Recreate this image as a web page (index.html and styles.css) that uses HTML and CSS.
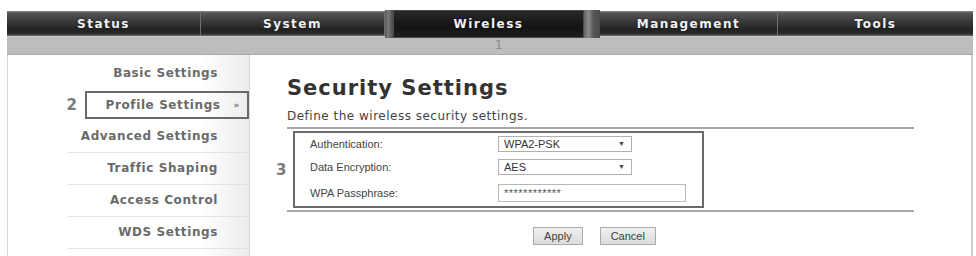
FILE: index.html
```html
<!DOCTYPE html>
<html>
<head>
<meta charset="utf-8">
<link rel="stylesheet" href="styles.css">
</head>
<body>
<div class="page">
  <nav class="topnav">
    <div class="tab">Status</div>
    <div class="tab">System</div>
    <div class="tab active"><span class="tab-inner">Wireless</span></div>
    <div class="tab">Management</div>
    <div class="tab last">Tools</div>
  </nav>
  <div class="subbar"><span class="subnum">1</span></div>
  <div class="main">
    <aside class="sidebar">
      <div class="side-item first">Basic Settings</div>
      <div class="side-row">
        <span class="anno">2</span>
        <div class="side-current"><span>Profile Settings</span><span class="raquo">&raquo;</span></div>
      </div>
      <div class="side-item">Advanced Settings</div>
      <div class="side-item">Traffic Shaping</div>
      <div class="side-item">Access Control</div>
      <div class="side-item">WDS Settings</div>
    </aside>
    <section class="content">
      <h1 class="title">Security Settings</h1>
      <p class="desc">Define the wireless security settings.</p>
      <div class="formwrap">
        <span class="anno anno3">3</span>
        <div class="formbox">
          <div class="frow">
            <label class="flabel">Authentication:</label>
            <div class="fsel"><span class="fsel-val">WPA2-PSK</span><span class="fsel-arrow">&#9660;</span></div>
          </div>
          <div class="frow">
            <label class="flabel">Data Encryption:</label>
            <div class="fsel"><span class="fsel-val">AES</span><span class="fsel-arrow">&#9660;</span></div>
          </div>
          <div class="frow">
            <label class="flabel">WPA Passphrase:</label>
            <div class="finput">************</div>
          </div>
        </div>
      </div>
      <div class="buttons">
        <button class="btn">Apply</button>
        <button class="btn">Cancel</button>
      </div>
    </section>
  </div>
</div>
</body>
</html>
```
FILE: styles.css
```css
html, body {
  margin: 0;
  padding: 0;
  background: #ffffff;
}
.page {
  margin: 11px 0 0 7px;
  width: 966px;
  font-family: "DejaVu Sans", Verdana, sans-serif;
}
.topnav {
  display: grid;
  grid-template-columns: 194px 184px 215px 178px 195px;
  height: 25px;
  background: linear-gradient(#8a8a8a 0, #555 2px, #3e3e3e 35%, #222 75%, #2a2a2a 90%, #6a6a6a 100%);
}
.tab {
  display: flex;
  align-items: center;
  justify-content: center;
  color: #f2f2f2;
  font-weight: bold;
  font-size: 12px;
  letter-spacing: 1.5px;
  text-shadow: 0 0 2px rgba(0,0,0,0.6);
  border-right: 1px solid #6e6e6e;
}
.tab.last { border-right: none; }
.tab.active {
  border-right: none;
  padding: 0 16px 0 8px;
  margin-top: -1px;
  margin-bottom: -2px;
  background: linear-gradient(to right, #5a5a5a, #7a7a7a 40%, #4a4a4a 100%) left / 8px 100% no-repeat,
              linear-gradient(to right, #666, #8a8a8a 30%, #555 60%, #4a4a4a) right / 16px 100% no-repeat;
}
.tab-inner {
  flex: 1;
  height: 100%;
  display: flex;
  align-items: center;
  justify-content: center;
  background: linear-gradient(#2a2a2a, #141414 60%, #1e1e1e);
  box-shadow: inset 0 0 0 1px #4a4a4a;
}
.subbar {
  height: 19px;
  background: #bdbdbd;
  border-top: 1px solid #c8c8c8;
  border-bottom: 1px solid #aaa;
  box-sizing: border-box;
  font-size: 12px;
  line-height: 17px;
  color: #8a8a8a;
  padding-left: 488px;
}
.main {
  display: flex;
  height: 201px;
  border-left: 1px solid #d6d6d6;
  border-right: 2px solid #cfcfcf;
}
.sidebar {
  width: 241px;
  padding-top: 2px;
  border-right: 1px solid #d8d8d8;
  background: linear-gradient(to right, #ffffff 0, #ffffff 80%, #ececec 100%);
}
.side-item {
  height: 31px;
  line-height: 31px;
  text-align: right;
  padding-right: 31px;
  margin-left: 60px;
  border-bottom: 1px solid #e3e3e3;
  font-size: 12px;
  font-weight: bold;
  letter-spacing: 0.6px;
  color: #6a6a6a;
}
.side-item.first { border-bottom: none; height: 32px; line-height: 32px; }
.side-row {
  height: 32px;
  display: flex;
  align-items: center;
  justify-content: flex-end;
}
.anno {
  font-family: "DejaVu Sans", Verdana, sans-serif;
  font-size: 15px;
  font-weight: bold;
  color: #7a7a7a;
}
.side-row .anno { margin-right: 8px; }
.side-current {
  width: 164px;
  height: 28px;
  box-sizing: border-box;
  border: 2px solid #6a6a6a;
  display: flex;
  align-items: center;
  justify-content: flex-end;
  padding-right: 7px;
  font-size: 12px;
  font-weight: bold;
  letter-spacing: 0.6px;
  color: #6a6a6a;
}
.raquo {
  font-size: 9px;
  margin-left: 13px;
  color: #777;
}
.content {
  flex: 1;
  padding-left: 37px;
  padding-right: 57px;
}
.title {
  margin: 21px 0 0 0;
  font-size: 21px;
  font-weight: bold;
  letter-spacing: 1px;
  color: #333;
  line-height: 24px;
}
.desc {
  margin: 9px 0 0 0;
  font-size: 12px;
  letter-spacing: 0.5px;
  color: #444;
  line-height: 14px;
}
.formwrap {
  position: relative;
  margin-top: 4px;
  border-top: 2px solid #a8a8a8;
  border-bottom: 2px solid #a8a8a8;
  padding: 2px 0 2px 6px;
}
.anno3 {
  position: absolute;
  left: -11px;
  top: 32px;
}
.formbox {
  width: 411px;
  box-sizing: border-box;
  border: 2px solid #6a6a6a;
  display: grid;
  grid-template-rows: 21px 25px 27px;
  padding-left: 15px;
}
.frow {
  display: flex;
  align-items: center;
}
.flabel {
  width: 188px;
  font-family: "Liberation Sans", Arial, sans-serif;
  font-size: 11px;
  color: #444;
}
.fsel {
  position: relative;
  width: 134px;
  height: 16px;
  box-sizing: border-box;
  border: 1px solid #b0b0b0;
  display: flex;
  align-items: center;
  padding-left: 5px;
  font-family: "Liberation Sans", Arial, sans-serif;
  font-size: 11px;
  color: #333;
}
.fsel-arrow {
  position: absolute;
  right: 6px;
  top: 3px;
  font-size: 7px;
  color: #444;
}
.finput {
  width: 188px;
  height: 18px;
  box-sizing: border-box;
  border: 1px solid #b8b8b8;
  padding-left: 5px;
  font-family: "Liberation Sans", Arial, sans-serif;
  font-size: 11px;
  line-height: 16px;
  color: #555;
  letter-spacing: 0.5px;
}
.buttons {
  display: flex;
  justify-content: center;
  gap: 17px;
  margin-top: 15px;
  padding-right: 12px;
}
.btn {
  height: 18px;
  padding: 0 10px;
  font-family: "Liberation Sans", Arial, sans-serif;
  font-size: 11px;
  color: #444;
  background: linear-gradient(#f0f0f0, #dcdcdc);
  border: 1px solid #aaa;
  border-radius: 0;
}
```
